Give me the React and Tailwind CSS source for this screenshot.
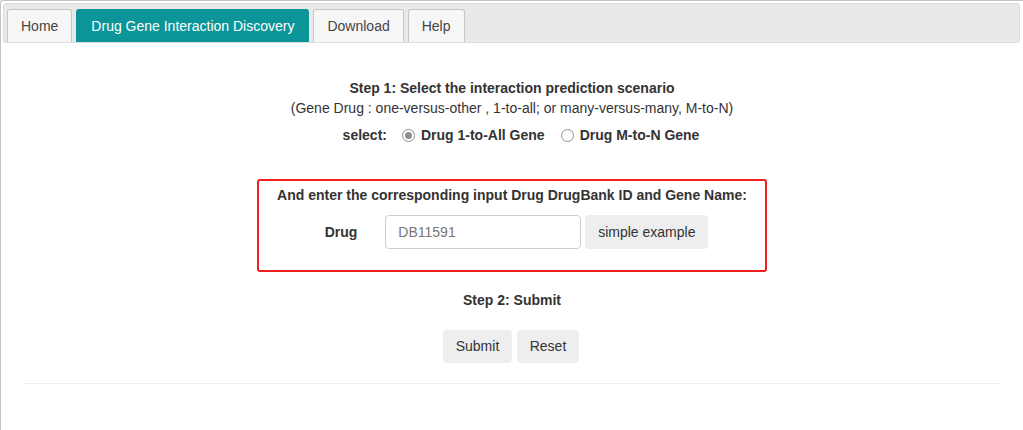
import React, { useState } from 'react';

const tabs = ['Home', 'Drug Gene Interaction Discovery', 'Download', 'Help'];

const Radio = ({ checked, onClick }) => (
  <span
    onClick={onClick}
    className="inline-flex items-center justify-center w-[13px] h-[13px] rounded-full border border-[#8f8f8f] bg-white cursor-pointer"
  >
    {checked && <span className="w-[7px] h-[7px] rounded-full bg-[#8f8f8f]"></span>}
  </span>
);

const App = () => {
  const [active, setActive] = useState(1);
  const [mode, setMode] = useState('1toall');
  const [drug, setDrug] = useState('');

  return (
    <div
      className="min-h-[430px] border-l border-t border-[#c5c5c5] rounded-tl-[3px] p-[2px] text-[14px] text-[#333]"
      style={{ fontFamily: '"Liberation Sans", Arial, sans-serif' }}
    >
      <div className="h-[40px] bg-[#e9e9e9] border border-[#dddddd] rounded-[3px] flex items-end pl-[3px] mr-[1px]">
        {tabs.map((t, i) => (
          <button
            key={t}
            onClick={() => setActive(i)}
            className={
              i === active
                ? 'h-[33px] px-[14px] mr-[4px] rounded-t-[3px] border border-b-0 border-[#0b9598] bg-[#0b9598] text-white leading-none'
                : 'h-[33px] px-[13px] mr-[4px] rounded-t-[3px] border border-b-0 border-[#c5c5c5] bg-[#f6f6f6] text-[#454545] leading-none'
            }
          >
            {t}
          </button>
        ))}
      </div>

      <div className="px-[20px] pt-[35px]">
        <div className="text-center leading-[20px]">
          <p className="font-bold">Step 1: Select the interaction prediction scenario</p>
          <p>(Gene Drug : one-versus-other , 1-to-all; or many-versus-many, M-to-N)</p>
          <div className="mt-[7px] h-[20px] flex items-center justify-center font-bold pl-[18px]">
            <span>select:</span>
            <span className="ml-[15px] mr-[6px] flex"><Radio checked={mode === '1toall'} onClick={() => setMode('1toall')} /></span>
            <span>Drug 1-to-All Gene</span>
            <span className="ml-[16px] mr-[6px] flex"><Radio checked={mode === 'mton'} onClick={() => setMode('mton')} /></span>
            <span>Drug M-to-N Gene</span>
          </div>
        </div>

        <div className="mx-auto mt-[34px] w-[510px] h-[93px] border-2 border-[#f01e1e] rounded-[3px] pt-[4px]">
          <p className="text-center font-bold leading-[20px]">And enter the corresponding input Drug DrugBank ID and Gene Name:</p>
          <div className="mt-[10px] flex items-center justify-center pl-[9px]">
            <span className="font-bold">Drug</span>
            <input
              value={drug}
              onChange={(e) => setDrug(e.target.value)}
              placeholder="DB11591"
              className="ml-[28px] w-[196px] h-[34px] px-[12px] border border-[#cccccc] rounded-[4px] outline-none placeholder:text-[#777] text-[#555]"
            />
            <button
              onClick={() => setDrug('DB11591')}
              className="ml-[4px] w-[123px] h-[34px] bg-[#eeeeee] rounded-[4px] text-[#333]"
            >
              simple example
            </button>
          </div>
        </div>

        <p className="mt-[18px] text-center font-bold leading-[20px]">Step 2: Submit</p>
        <div className="mt-[20px] flex justify-center gap-[5px] pr-[2px]">
          <button className="w-[69px] h-[33px] bg-[#eeeeee] rounded-[4px] text-[#333]">Submit</button>
          <button onClick={() => setDrug('')} className="w-[62px] h-[33px] bg-[#eeeeee] rounded-[4px] text-[#333]">Reset</button>
        </div>
        <hr className="mt-[20px] ml-[1px] mr-[1px] border-t border-[#eeeeee]" />
      </div>
    </div>
  );
};

export default App;
